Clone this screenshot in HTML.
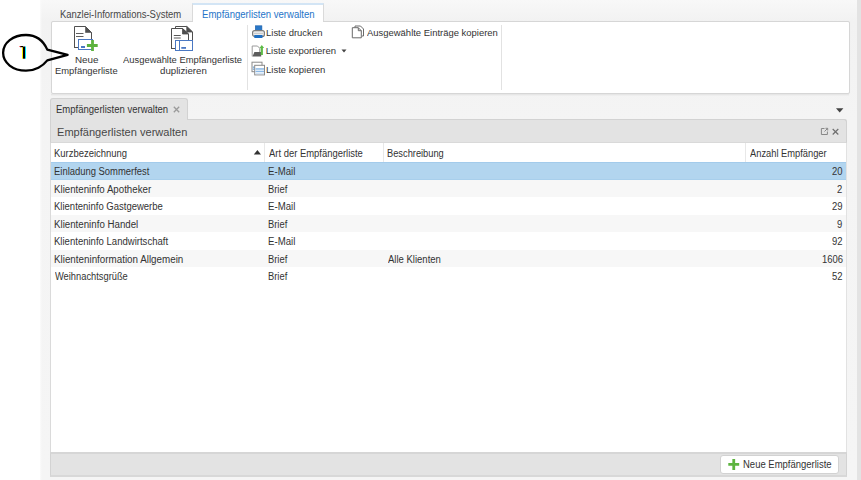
<!DOCTYPE html>
<html><head><meta charset="utf-8"><style>
html,body{margin:0;padding:0;width:861px;height:480px;overflow:hidden;background:#fff;}
.r{position:absolute;}
.t{position:absolute;white-space:nowrap;font-family:"Liberation Sans",sans-serif;line-height:20px;transform-origin:0 0;}
</style></head><body>
<div class="r" style="left:40px;top:0px;width:817px;height:480px;background:linear-gradient(#f8f8f8,#f2f2f2 21px,#f4f4f4 120px,#f5f5f5);"></div>
<div class="r" style="left:40px;top:0px;width:2px;height:480px;background:linear-gradient(90deg,#fbfbfb,rgba(251,251,251,0));"></div>
<div class="r" style="left:51px;top:94px;width:798px;height:1px;background:#e6e6e6;"></div>
<div class="r" style="left:51px;top:95px;width:798px;height:1px;background:#eeeeee;"></div>
<div class="r" style="left:857px;top:0px;width:4px;height:480px;background:#e3e3e3;"></div>
<div class="r" style="left:192px;top:3px;width:131.5px;height:20px;background:#fff;border:1px solid #dadada;border-top:2px solid #d3e5f5;border-bottom:none;box-sizing:border-box;"></div>
<div class="r" style="left:51px;top:21px;width:799px;height:73px;background:#fff;border:1px solid #d6d6d6;border-radius:2px;box-sizing:border-box;box-shadow:0 0 1px #e6e6e6;"></div>
<div class="r" style="left:193px;top:20px;width:130px;height:3px;background:#fff;"></div>
<svg class="r" style="left:72px;top:24px" width="28" height="28" viewBox="0 0 28 28">
<path d="M2.5 24 V2.5 H13.5 L19.5 8.5 V15.5" fill="none" stroke="#505050" stroke-width="1"/>
<path d="M13.5 2.5 L19.5 8.5 H13.5 Z" fill="#505050" stroke="#505050" stroke-width="0.6"/>
<path d="M2 23.5 H6.5" fill="none" stroke="#505050" stroke-width="1"/>
<path d="M4 9.5 H11.5 M4 12.5 H11.5" stroke="#5e5e5e" stroke-width="1"/>
<rect x="6.5" y="15.5" width="14" height="10" fill="#fff" stroke="#4a78c2" stroke-width="1"/>
<rect x="9" y="22" width="4" height="2" fill="#4a78c2"/>
<path d="M14.9 21.5 H25.7 M20.5 16 V26.9" stroke="#5cb23e" stroke-width="2.8"/>
</svg>
<svg class="r" style="left:168px;top:24px" width="28" height="28" viewBox="0 0 28 28">
<path d="M7.5 4.5 V2.5 H18.75 L24.5 8 V16.5" fill="#fff" stroke="#4e4e4e" stroke-width="1"/>
<path d="M18.75 2.5 L24.5 8 H18.75 Z" fill="#4e4e4e" stroke="#4e4e4e" stroke-width="0.8"/>
<path d="M3.5 24.5 V4.5 H14.5 L20.5 10 V16.5" fill="#fff" stroke="#4e4e4e" stroke-width="1"/>
<path d="M14.5 4.5 L20.5 10 H14.5 Z" fill="#4e4e4e" stroke="#4e4e4e" stroke-width="0.8"/>
<path d="M3 24.5 H7.5" fill="none" stroke="#4e4e4e" stroke-width="1"/>
<path d="M5.8 11.5 H12.7 M5.8 14 H12.7" stroke="#5a5a5a" stroke-width="1.1"/>
<rect x="7.5" y="16.5" width="17" height="10" fill="#fff" stroke="#4a78c2" stroke-width="1"/>
<path d="M11.5 16.5 V26.5" stroke="#4a78c2" stroke-width="1"/>
<rect x="13.3" y="23" width="4.7" height="1.8" fill="#4a78c2"/>
</svg>
<div class="r" style="left:247px;top:25px;width:1px;height:65px;background:#e2e2e2;"></div>
<div class="r" style="left:501px;top:25px;width:1px;height:65px;background:#e2e2e2;"></div>
<svg class="r" style="left:251px;top:25px" width="15" height="14" viewBox="0 0 15 14">
<rect x="4.3" y="0.8" width="6.6" height="4.9" fill="#2a78c8" stroke="#1d5fa8" stroke-width="0.6"/>
<rect x="1.6" y="5.6" width="11.8" height="5.8" rx="2" fill="#ececec" stroke="#7c7c7c" stroke-width="1.2"/>
<path d="M3 8.4 H12" stroke="#bdbdbd" stroke-width="0.8"/>
<rect x="3.3" y="10" width="8.2" height="3" fill="#1f6fc2"/>
</svg>
<svg class="r" style="left:251px;top:44px" width="15" height="14" viewBox="0 0 15 14">
<path d="M1.2 12.4 V2 H6.5 L8.7 4.3 V8.5" fill="#fff" stroke="#9a9a9a" stroke-width="1"/>
<path d="M1.5 12.6 L3.4 8 H10.2 V12.6 Z" fill="#5c5c5c"/>
<path d="M10.8 1 L13.1 4 H11.9 V10.9 H9.7 V4 H8.5 Z" fill="#5dbb46"/>
</svg>
<svg class="r" style="left:340.5px;top:49px" width="6" height="4" viewBox="0 0 6 4"><path d="M0.5 0.5 H5.5 L3 3.5 Z" fill="#444"/></svg>
<svg class="r" style="left:251px;top:61px" width="15" height="15" viewBox="0 0 15 15">
<rect x="1" y="1.2" width="10" height="9.5" fill="#fff" stroke="#8a8a8a" stroke-width="1"/>
<rect x="1.8" y="5.5" width="2" height="1.3" fill="#6fa3d8"/>
<rect x="1.8" y="7.5" width="2" height="1.3" fill="#6fa3d8"/>
<rect x="3.7" y="4.3" width="9.8" height="9.6" fill="#fff" stroke="#8a8a8a" stroke-width="1"/>
<rect x="4.5" y="7.2" width="8.5" height="1.5" fill="#8bb8e5"/>
<rect x="4.5" y="9.7" width="8.5" height="1.5" fill="#8bb8e5"/>
<rect x="4.5" y="12" width="8.5" height="1.2" fill="#cfe2f5"/>
</svg>
<svg class="r" style="left:351px;top:25px" width="14" height="14" viewBox="0 0 14 14">
<path d="M4 2.5 V1 H9.5 L12.5 4 V11 H11" fill="none" stroke="#6a6a6a" stroke-width="1"/>
<path d="M1.3 12.8 V2.7 H7.3 L10.3 5.7 V12.8 Z" fill="#fff" stroke="#6a6a6a" stroke-width="1"/>
<path d="M7.3 2.7 V5.7 H10.3" fill="none" stroke="#6a6a6a" stroke-width="1"/>
</svg>
<div class="r" style="left:50px;top:98px;width:138px;height:22px;background:#e3e3e3;border:1px solid #d2d2d2;border-bottom:none;border-radius:3px 3px 0 0;box-sizing:border-box;"></div>
<svg class="r" style="left:171px;top:104px" width="11" height="10" viewBox="0 0 11 10"><path d="M2.8 2.8 L8.2 8.2 M8.2 2.8 L2.8 8.2" stroke="#9a9a9a" stroke-width="1.3"/></svg>
<svg class="r" style="left:835px;top:107px" width="10" height="7" viewBox="0 0 10 7"><path d="M1 1.2 H8.4 L4.7 5.6 Z" fill="#444"/></svg>
<div class="r" style="left:50px;top:119px;width:797px;height:358px;background:#fff;border:1px solid #dadada;border-right-color:#e2e2e2;border-radius:0 3px 0 0;box-sizing:border-box;"></div>
<div class="r" style="left:50px;top:119px;width:797px;height:24px;background:#e3e3e3;border:1px solid #d2d2d2;border-bottom-color:#d9d9d9;border-radius:0 3px 0 0;box-sizing:border-box;"></div>
<div class="r" style="left:51px;top:118px;width:136px;height:3px;background:#e3e3e3;"></div>
<svg class="r" style="left:819px;top:126px" width="22" height="10" viewBox="0 0 22 10">
<path d="M5.5 2.5 H2.4 V8.5 H8.4 V5.5" fill="none" stroke="#888" stroke-width="1"/>
<path d="M5.5 5.5 L8.5 2.5 M6.5 2.3 H8.7 V4.5" fill="none" stroke="#888" stroke-width="1"/>
<path d="M13.7 3 L19.3 8.5 M19.3 3 L13.7 8.5" stroke="#6e6e6e" stroke-width="1.15"/>
</svg>
<div class="r" style="left:264px;top:143px;width:1px;height:19px;background:#e8e8e8;"></div>
<div class="r" style="left:383px;top:143px;width:1px;height:19px;background:#e8e8e8;"></div>
<div class="r" style="left:745px;top:143px;width:1px;height:19px;background:#e8e8e8;"></div>
<svg class="r" style="left:253px;top:149px" width="9" height="6" viewBox="0 0 9 6"><path d="M0.8 5.5 H8 L4.4 1 Z" fill="#333"/></svg>
<div class="r" style="left:51px;top:162.0px;width:795px;height:17.5px;background:#b2d5ef;border-top:1px solid #a3cbeb;border-bottom:1px solid #a8cfec;box-sizing:border-box;"></div>
<div class="r" style="left:51px;top:179.5px;width:795px;height:17.5px;background:#f7f7f7;"></div>
<div class="r" style="left:51px;top:197.0px;width:795px;height:17.5px;background:#fff;"></div>
<div class="r" style="left:51px;top:214.5px;width:795px;height:17.5px;background:#f7f7f7;"></div>
<div class="r" style="left:51px;top:232.0px;width:795px;height:17.5px;background:#fff;"></div>
<div class="r" style="left:51px;top:249.5px;width:795px;height:17.5px;background:#f7f7f7;"></div>
<div class="r" style="left:51px;top:267.0px;width:795px;height:17.5px;background:#fff;"></div>
<div class="r" style="left:50px;top:452px;width:797px;height:25px;background:#e3e3e3;border:1px solid #d3d3d3;border-top:2px solid #d6d6d6;border-bottom:2px solid #d8d8d8;box-sizing:border-box;"></div>
<div class="r" style="left:720px;top:455px;width:118.5px;height:18.5px;background:#fff;border:1px solid #d2d2d2;border-radius:3px;box-sizing:border-box;"></div>
<svg class="r" style="left:727px;top:458px" width="14" height="13" viewBox="0 0 14 13"><path d="M1.3 6.4 H12.2 M6.75 1 V11.9" stroke="#5db440" stroke-width="2.8"/></svg>
<svg class="r" style="left:0px;top:28px" width="75" height="50" viewBox="0 0 75 50">
<path d="M47.3 21.6 C43 12, 35 7, 26 7 C13 7, 3.1 14.8, 3.1 24.85 C3.1 34.9, 13 42.7, 26 42.7 C35 42.7, 43 38, 47.3 32.4 L67.6 26.8 Z" fill="none" stroke="#000" stroke-width="2.3" stroke-linejoin="round"/>
<rect x="22" y="18.5" width="1" height="12.2" fill="#ffea00"/>
<rect x="23" y="18.5" width="2" height="12.2" fill="#000"/>
<rect x="25" y="18.5" width="1" height="12.2" fill="#00e5ff"/>
<rect x="20" y="18" width="3" height="1.2" fill="#000"/>
<rect x="19.5" y="18" width="1" height="1" fill="#ff2020"/>
</svg>
<div class="t" style="left:60.05px;top:5.00px;font-size:10.0px;color:#474747;transform:scaleX(0.9484)">Kanzlei-Informations-System</div>
<div class="t" style="left:201.74px;top:4.60px;font-size:10.0px;color:#2574c8;transform:scaleX(0.9560)">Empfängerlisten verwalten</div>
<div class="t" style="left:74.53px;top:50.00px;font-size:9.2px;color:#333333;transform:scaleX(1.0714)">Neue</div>
<div class="t" style="left:54.58px;top:60.80px;font-size:9.2px;color:#333333;transform:scaleX(1.0217)">Empfängerliste</div>
<div class="t" style="left:123.30px;top:49.90px;font-size:9.2px;color:#333333;transform:scaleX(1.0224)">Ausgewählte Empfängerliste</div>
<div class="t" style="left:159.80px;top:60.70px;font-size:9.2px;color:#333333;transform:scaleX(1.0523)">duplizieren</div>
<div class="t" style="left:265.80px;top:22.90px;font-size:9.5px;color:#333333;transform:scaleX(0.9982)">Liste drucken</div>
<div class="t" style="left:265.80px;top:41.20px;font-size:9.5px;color:#333333;transform:scaleX(1.0000)">Liste exportieren</div>
<div class="t" style="left:265.80px;top:59.70px;font-size:9.5px;color:#333333;transform:scaleX(1.0017)">Liste kopieren</div>
<div class="t" style="left:366.70px;top:22.90px;font-size:9.5px;color:#333333;transform:scaleX(0.9947)">Ausgewählte Einträge kopieren</div>
<div class="t" style="left:55.75px;top:100.00px;font-size:10.0px;color:#333333;transform:scaleX(0.9517)">Empfängerlisten verwalten</div>
<div class="t" style="left:57.01px;top:121.60px;font-size:11.2px;color:#474747;transform:scaleX(0.9885)">Empfängerlisten verwalten</div>
<div class="t" style="left:53.96px;top:143.90px;font-size:10.0px;color:#333333;transform:scaleX(0.9447)">Kurzbezeichnung</div>
<div class="t" style="left:268.80px;top:143.90px;font-size:10.0px;color:#333333;transform:scaleX(0.9434)">Art der Empfängerliste</div>
<div class="t" style="left:386.87px;top:143.90px;font-size:10.0px;color:#333333;transform:scaleX(0.9283)">Beschreibung</div>
<div class="t" style="left:749.80px;top:143.90px;font-size:10.0px;color:#333333;transform:scaleX(0.9317)">Anzahl Empfänger</div>
<div class="t" style="left:53.96px;top:162.30px;font-size:10.0px;color:#333333;transform:scaleX(0.9430)">Einladung Sommerfest</div>
<div class="t" style="left:267.84px;top:162.30px;font-size:10.0px;color:#333333;transform:scaleX(0.9630)">E-Mail</div>
<div class="t" style="left:832.28px;top:161.30px;font-size:11.0px;color:#333333;transform:scaleX(0.8600)">20</div>
<div class="t" style="left:53.93px;top:179.80px;font-size:10.0px;color:#333333;transform:scaleX(0.9707)">Klienteninfo Apotheker</div>
<div class="t" style="left:267.96px;top:179.80px;font-size:10.0px;color:#333333;transform:scaleX(0.9350)">Brief</div>
<div class="t" style="left:837.44px;top:178.80px;font-size:11.0px;color:#333333;transform:scaleX(0.8600)">2</div>
<div class="t" style="left:53.95px;top:197.30px;font-size:10.0px;color:#333333;transform:scaleX(0.9504)">Klienteninfo Gastgewerbe</div>
<div class="t" style="left:267.84px;top:197.30px;font-size:10.0px;color:#333333;transform:scaleX(0.9630)">E-Mail</div>
<div class="t" style="left:832.28px;top:196.30px;font-size:11.0px;color:#333333;transform:scaleX(0.8600)">29</div>
<div class="t" style="left:53.93px;top:214.80px;font-size:10.0px;color:#333333;transform:scaleX(0.9718)">Klienteninfo Handel</div>
<div class="t" style="left:267.96px;top:214.80px;font-size:10.0px;color:#333333;transform:scaleX(0.9350)">Brief</div>
<div class="t" style="left:837.44px;top:213.80px;font-size:11.0px;color:#333333;transform:scaleX(0.8600)">9</div>
<div class="t" style="left:53.95px;top:232.30px;font-size:10.0px;color:#333333;transform:scaleX(0.9546)">Klienteninfo Landwirtschaft</div>
<div class="t" style="left:267.84px;top:232.30px;font-size:10.0px;color:#333333;transform:scaleX(0.9630)">E-Mail</div>
<div class="t" style="left:832.28px;top:231.30px;font-size:11.0px;color:#333333;transform:scaleX(0.8600)">92</div>
<div class="t" style="left:53.92px;top:249.80px;font-size:10.0px;color:#333333;transform:scaleX(0.9815)">Klienteninformation Allgemein</div>
<div class="t" style="left:267.96px;top:249.80px;font-size:10.0px;color:#333333;transform:scaleX(0.9350)">Brief</div>
<div class="t" style="left:387.60px;top:249.80px;font-size:10.0px;color:#333333;transform:scaleX(0.9509)">Alle Klienten</div>
<div class="t" style="left:821.96px;top:248.80px;font-size:11.0px;color:#333333;transform:scaleX(0.8600)">1606</div>
<div class="t" style="left:54.90px;top:267.30px;font-size:10.0px;color:#333333;transform:scaleX(0.9308)">Weihnachtsgrüße</div>
<div class="t" style="left:267.96px;top:267.30px;font-size:10.0px;color:#333333;transform:scaleX(0.9350)">Brief</div>
<div class="t" style="left:832.28px;top:266.30px;font-size:11.0px;color:#333333;transform:scaleX(0.8600)">52</div>
<div class="t" style="left:742.75px;top:455.40px;font-size:10.0px;color:#333333;transform:scaleX(0.9489)">Neue Empfängerliste</div>
</body></html>
